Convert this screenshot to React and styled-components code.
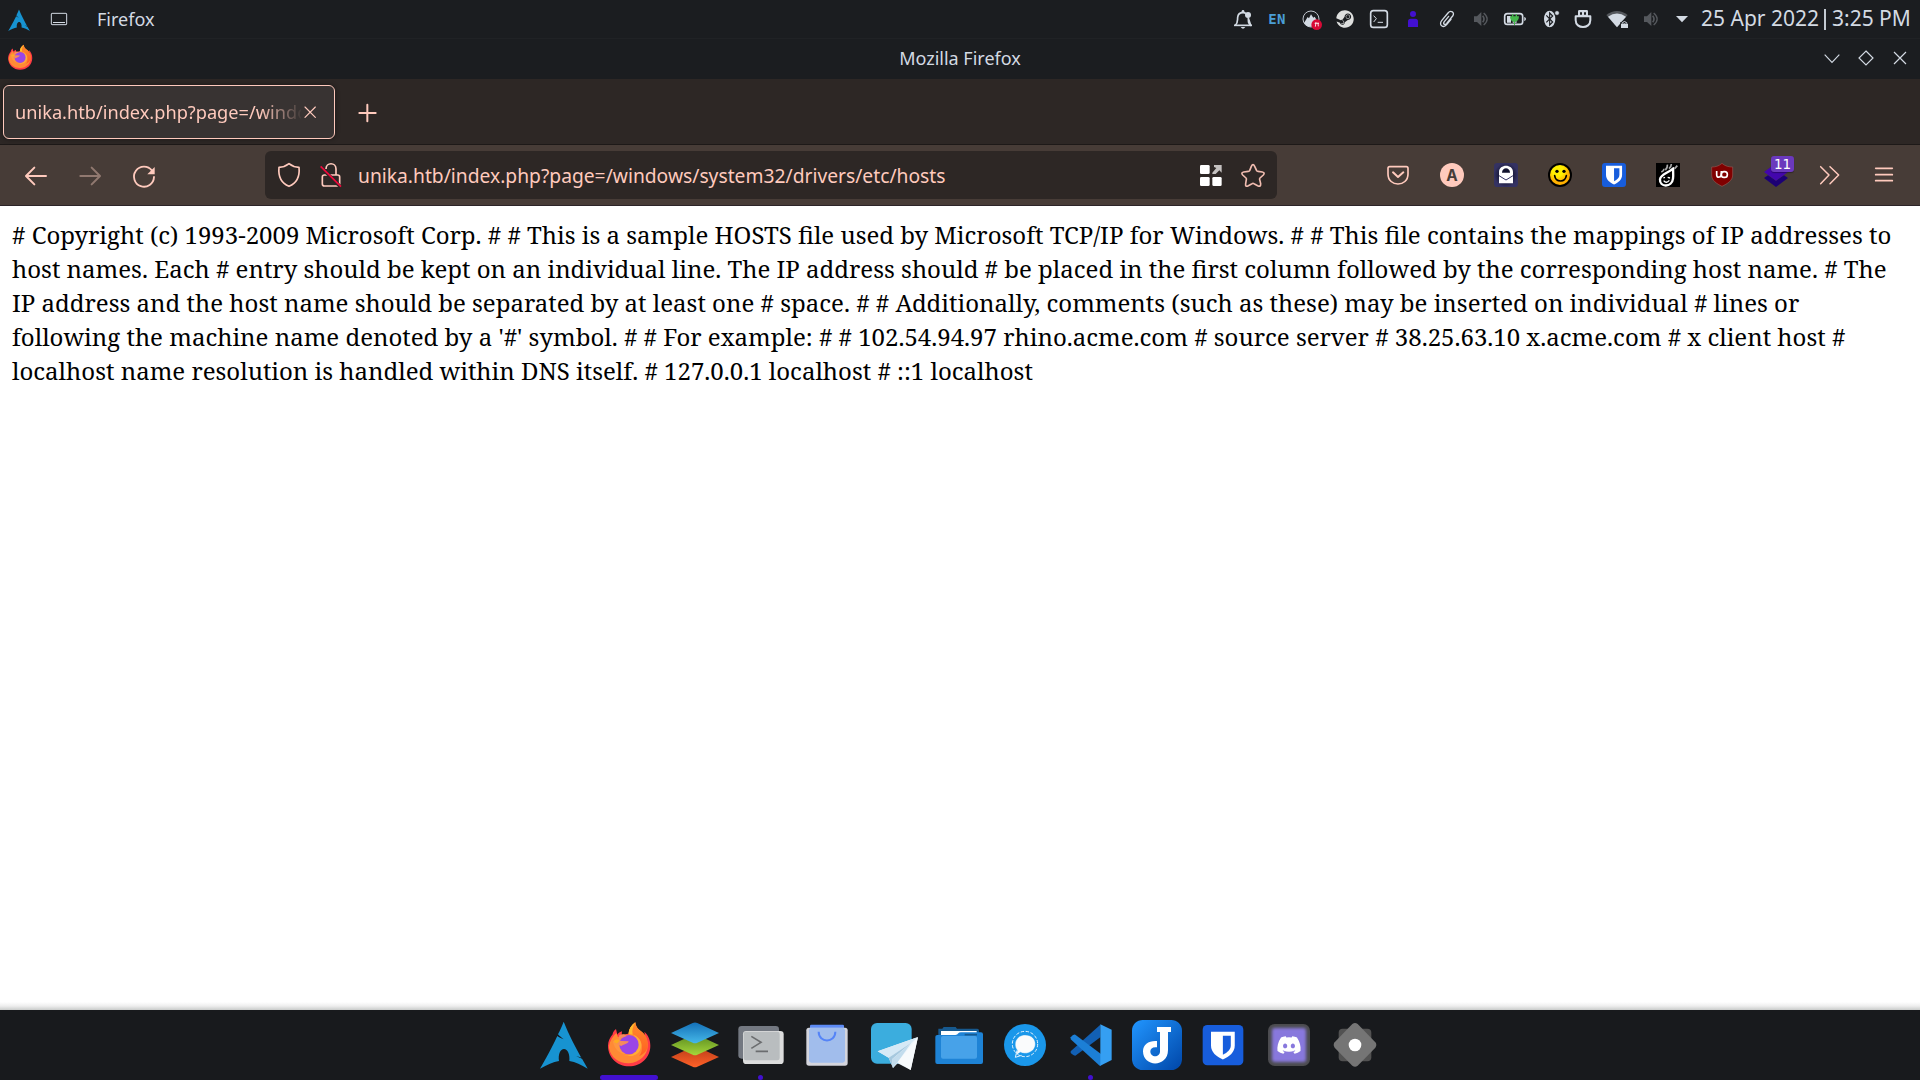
import React from "react";
import styled, { createGlobalStyle } from "styled-components";
import { FaSteam, FaDiscord } from "react-icons/fa";

const Global = createGlobalStyle`
  * { box-sizing: border-box; }
  body { margin: 0; background: #fff; overflow: hidden; }
`;

const Desktop = styled.div`
  width: 1920px;
  height: 1080px;
  display: flex;
  flex-direction: column;
  font-family: "Noto Sans", sans-serif;
  color: #d3dae3;
`;

const Panel = styled.header`
  height: 39px;
  flex: none;
  display: flex;
  align-items: center;
  background: #1b1d20;
  border-bottom: 1px solid #202225;
`;

const Glyph = styled.svg`
  display: block;
  flex: none;
  width: ${(p) => p.$w}px;
  height: ${(p) => p.$h}px;
`;

const AppName = styled.span`
  flex: 1;
  font-size: 18px;
  line-height: 38px;
  padding-left: 16px;
`;

const Tray = styled.div`
  display: flex;
  align-items: center;
`;

const TrayCell = styled.div`
  width: 34px;
  height: 39px;
  display: flex;
  align-items: center;
  justify-content: center;
  color: ${(p) => p.$color || "#d3dae3"};
  font-size: 14px;
  font-weight: 600;
  letter-spacing: 0.4px;
  font-family: "DejaVu Sans Mono", monospace;
  svg { flex: none; }
`;

const Clock = styled.div`
  display: flex;
  align-items: center;
  width: 224px;
  height: 37px;
  margin-bottom: 1px;
  padding-left: 5px;
  font-size: 21px;
  line-height: 37px;
  white-space: nowrap;
`;

const ClockRule = styled.i`
  width: 2px;
  height: 21px;
  margin: 2px 6px 0 5px;
  background: #c3c9d1;
`;

const TitleBar = styled.div`
  height: 40px;
  flex: none;
  display: grid;
  grid-template-columns: 1fr auto 1fr;
  align-items: center;
  background: #1b1d20;
`;

const WindowTitle = styled.span`
  font-size: 18px;
  line-height: 38px;
  padding-bottom: 2px;
`;

const WindowButtons = styled.div`
  display: flex;
  justify-content: flex-end;
  padding-right: 3px;
`;

const TabStrip = styled.div`
  height: 66px;
  flex: none;
  display: flex;
  padding: 6px 3px 0;
  background: #2d2725;
  border-bottom: 1px solid #1d1918;
`;

const Tab = styled.div`
  width: 332px;
  height: 54px;
  display: flex;
  align-items: center;
  padding-left: 11px;
  border: 1px solid #ffcabd;
  border-radius: 6px;
  background: #383332;
  box-shadow: 0 0 5px rgba(0, 0, 0, 0.45);
  color: #ffcabd;
`;

const TabLabel = styled.span`
  width: 286px;
  overflow: hidden;
  white-space: nowrap;
  font-size: 18.2px;
  line-height: 30px;
  mask-image: linear-gradient(to right, #000 245px, transparent 288px);
`;

const Toolbar = styled.nav`
  height: 61px;
  flex: none;
  display: flex;
  align-items: center;
  background: #473c37;
  border-bottom: 1px solid #2c2428;
`;

const NavButtons = styled.div`
  width: 265px;
  display: flex;
  padding-left: 9px;
`;

const UrlField = styled.div`
  width: 1012px;
  height: 48px;
  display: flex;
  align-items: center;
  border-radius: 6px;
  background: #2d2725;
  color: #ffcabd;
`;

const UrlText = styled.span`
  flex: 1;
  font-size: 19.25px;
  line-height: 46px;
  padding-top: 2px;
  white-space: nowrap;
`;

const Extensions = styled.div`
  display: flex;
  margin-left: 94px;
`;

const ExtensionSlot = styled.div`
  position: relative;
  width: 54px;
  height: 61px;
`;

const Badge = styled.span`
  position: absolute;
  left: 22px;
  top: 11px;
  width: 23px;
  height: 16px;
  border-radius: 3px;
  background: #6b39bd;
  box-shadow: 0 1px 1px rgba(0, 0, 0, 0.35);
  color: #fff;
  font-family: "DejaVu Sans", sans-serif;
  font-size: 13.5px;
  line-height: 16px;
  text-align: center;
`;

const Page = styled.main`
  flex: 1;
  padding: 12px 12px 0;
  background: linear-gradient(to top, #c9cbca 0, #eeeeee 4px, #fff 8px);
  color: #000;
  font-family: "Noto Serif", "DejaVu Serif Condensed", serif;
  font-size: 24px;
  line-height: 34px;
`;

const Dock = styled.footer`
  height: 70px;
  flex: none;
  display: flex;
  justify-content: center;
  background: #181a1d;
`;

const DockItem = styled.div`
  position: relative;
  width: 66px;
  height: 70px;
`;

const Running = styled.i`
  position: absolute;
  bottom: 0;
  left: ${(p) => (p.$active ? 3 : 29)}px;
  width: ${(p) => (p.$active ? 58 : 5)}px;
  height: 5px;
  border-radius: 3px;
  background: #4210d0;
`;

const PINK = "#ffcabd";
const LIGHT = "#d3dae3";

/* Glyphs are drawn on a grid of three units per pixel. */
function Art({ box, children, ...rest }) {
  const [, , w, h] = box;
  return (
    <Glyph $w={w / 3} $h={h / 3} viewBox={box.join(" ")} fill="none" {...rest}>
      {children}
    </Glyph>
  );
}

const tray = (x, w = 102) => [x, 0, w, 117];
const ext = (x) => [x, 15, 162, 183];
const dock = (x) => [x, 30, 198, 210];

const ARCH = "M101 65C95 80 91 90 84 103C90 109 94 113 101 118C93 115 87 112 82 108C73 127 59 156 30 206C52 194 69 186 87 183C84 163 91 147 102 147C113 147 120 163 118 183C137 186 153 194 173 206C167 195 161 186 157 178C152 174 147 172 139 169C146 170 151 172 154 173C135 138 118 107 101 65Z";

function FirefoxArt() {
  return (
    <>
      <defs>
        <linearGradient id="fxFlame" x1="0.5" y1="0" x2="0.5" y2="1">
          <stop offset="0" stopColor="#ff8a2b" />
          <stop offset="1" stopColor="#ff5f22" />
        </linearGradient>
      </defs>
      <path d="M258 87C250 93 248 99 248 103C240 112 234 124 234 137C234 172 262 199 297 199C333 199 361 172 361 137C361 121 356 106 343 95L346 112L300 100L275 106L276 94C268 97 264 100 262 104Z" fill="#ff3a46" />
      <path d="M316 67C303 77 297 88 295 104C279 102 270 107 264 112L259 99C244 113 237 130 237 144C243 174 268 191 297 190C330 188 352 165 353 139C354 119 347 104 332 93C320 84 317 76 316 67Z" fill="#ff8a35" />
      <path d="M316 67C303 77 296 88 296 101C315 101 330 112 335 132C338 148 334 160 327 169C345 160 353 149 353 137C355 112 341 99 329 91C320 84 317 76 316 67Z" fill="url(#fxFlame)" />
      <path d="M316 67C303 77 296 88 296 101L308 104C305 91 309 78 316 67Z" fill="#ffbd2a" />
      <path d="M310 105C331 112 339 132 331 149C323 166 300 174 277 163C294 171 313 163 319 149C326 134 324 116 310 105Z" fill="#ffad35" />
      <path d="M249 126C259 117 270 119 279 121C291 124 296 123 294 128C287 136 277 134 272 144C274 156 284 161 293 163C266 162 253 145 249 126Z" fill="#ff9640" />
      <circle cx="297" cy="134" r="29" fill="#9a45e6" />
      <path d="M268 105C277 101 286 103 290 108L274 115C266 120 268 124 277 123L296 124C295 131 283 132 274 138C260 133 251 129 249 124C256 118 262 119 266 119Z" fill="#f58b5d" />
      <path d="M250 126C254 117 263 117 269 122L261 131Z" fill="#ffab1f" />
    </>
  );
}

function ShieldArt({ x, y, s }) {
  return (
    <g transform={`translate(${x} ${y}) scale(${s})`}>
      <path d="M0 0H72V42C72 62 56 76 36 84C16 76 0 62 0 42Z" fill="#fff" />
      <path d="M36 12H60V42C60 54 50 63 36 70Z" fill="#175ddc" />
    </g>
  );
}

function SpeakerArt({ box, x }) {
  return (
    <Art box={box}>
      <g transform={`translate(${x} 0)`} fill="#55585d">
        <path d="M0 49H9L22 36V78L9 66H0Z" />
        <path d="M26 47Q34 57 26 67" stroke="#55585d" strokeWidth="5" fill="none" />
        <path d="M29 39Q50 57 29 75" stroke="#55585d" strokeWidth="4" fill="none" />
      </g>
    </Art>
  );
}

function SystemTray() {
  return (
    <Tray>
      <TrayCell>
        <Art box={tray(18)} stroke={LIGHT} strokeWidth="5">
          <path d="M46 76C54 69 52 64 53 52C54 42 60 38 69 38C73 38 76 39 78 41M85 55C85 67 85 70 92 76Z" strokeLinejoin="round" />
          <path d="M42 76H96" />
          <circle cx="69" cy="34" r="4" fill={LIGHT} stroke="none" />
          <path d="M62 81H76Q69 92 62 81Z" fill={LIGHT} stroke="none" />
          <circle cx="84" cy="45" r="9" fill={LIGHT} stroke="none" />
        </Art>
      </TrayCell>
      <TrayCell $color="#4a9ed6">EN</TrayCell>
      <TrayCell>
        <Art box={tray(222)}>
          <circle cx="273" cy="57" r="24" stroke="#bfc4cc" strokeWidth="3" />
          <path d="M252 69L263 51L267 55L273 43L280 53L284 50L294 67Q287 80 272 80Q258 80 252 69Z" fill={LIGHT} />
          <circle cx="290" cy="74" r="16" fill="#d80a36" />
          <path d="M284 70H297M288 66L286 80M294 68L295 79" stroke="#fff" strokeWidth="2.500" />
        </Art>
      </TrayCell>
      <TrayCell $color="#dedfde"><FaSteam size={18} /></TrayCell>
      <TrayCell>
        <Art box={tray(426)} stroke={LIGHT}>
          <rect x="452" y="32" width="50" height="50" rx="8" strokeWidth="5" />
          <path d="M461 47L469 56L461 66M473 67H489" strokeWidth="3" />
        </Art>
      </TrayCell>
      <TrayCell>
        <Art box={tray(528)}>
          <circle cx="579" cy="42" r="9" fill="#4210d0" />
          <path d="M564 81V64Q564 56 572 56H586Q594 56 594 64V81Z" fill="#4210d0" />
        </Art>
      </TrayCell>
      <TrayCell>
        <Art box={tray(630)} stroke={LIGHT} strokeWidth="4" strokeLinecap="round">
          <path d="M686 49L673 65C668 72 674 77 680 70L698 48C706 37 692 29 684 39L665 62C655 75 670 86 680 74L693 58" />
        </Art>
      </TrayCell>
      <TrayCell><SpeakerArt box={tray(732)} x={762} /></TrayCell>
      <TrayCell>
        <Art box={tray(834)}>
          <rect x="854" y="41" width="54" height="32" rx="8" fill="#1b1d20" stroke={LIGHT} strokeWidth="5" />
          <path d="M861 48H873V68H861ZM878 64H890V68H878Z" fill={LIGHT} />
          <path d="M914 52Q920 57 914 62Z" fill={LIGHT} stroke={LIGHT} strokeWidth="2" />
          <path d="M870 49H876V42H880V49H887V42H891V49H897C897 59 892 65 885 66V75H882V66C875 65 870 59 870 49Z" fill="#45b54c" />
        </Art>
      </TrayCell>
      <TrayCell>
        <Art box={tray(936)}>
          <ellipse cx="989" cy="57" rx="17" ry="25" fill={LIGHT} />
          <path d="M979 46L998 66L989 75V39L998 48L979 67" stroke="#1b1d20" strokeWidth="3.500" />
          <circle cx="1011" cy="39" r="7" fill={LIGHT} stroke="#1b1d20" strokeWidth="2" />
        </Art>
      </TrayCell>
      <TrayCell>
        <Art box={tray(48)}>
          <path d="M77 49H121V61C121 88 77 88 77 61Z" stroke={LIGHT} strokeWidth="6" strokeLinejoin="round" />
          <path d="M84 49V34Q84 30 88 30H110Q114 30 114 34V49ZM90 37V44H96V37ZM102 37V44H108V37Z" fill={LIGHT} fillRule="evenodd" />
        </Art>
      </TrayCell>
      <TrayCell>
        <Art box={tray(150)}>
          <path d="M169 45Q201 21 233 45L201 82Z" fill="#55585d" />
          <path d="M174 50Q201 31 228 50L201 82Z" fill={LIGHT} />
          <path d="M211 66H236V86H211Z" fill="#1b1d20" />
          <rect x="213" y="70" width="21" height="14" fill={LIGHT} />
          <path d="M217 71V68Q223 60 230 68V71" stroke="#1b1d20" strokeWidth="7" />
          <path d="M217 71V68Q223 61 230 68V71" stroke={LIGHT} strokeWidth="3" />
        </Art>
      </TrayCell>
      <TrayCell><SpeakerArt box={tray(252)} x={282} /></TrayCell>
      <Art box={tray(354, 84)}>
        <path d="M378 48H414L396 67Z" fill={LIGHT} />
      </Art>
    </Tray>
  );
}

function BrowserToolbar() {
  return (
    <Toolbar>
      <NavButtons>
        <Art box={[27, 435, 162, 183]} stroke={PINK} strokeWidth="6" strokeLinecap="round" strokeLinejoin="round">
          <path d="M138 528H79M103 503L78 528L103 553" />
        </Art>
        <Art box={[189, 435, 162, 183]} stroke="#917970" strokeWidth="6" strokeLinecap="round" strokeLinejoin="round">
          <path d="M241 528H299M275 503L300 528L275 553" />
        </Art>
        <Art box={[351, 435, 162, 183]} stroke={PINK} strokeWidth="5.500" strokeLinecap="round">
          <path d="M456 512A30 30 0 1 0 462 531" />
          <path d="M464 501V523H442Z" fill={PINK} stroke="none" />
        </Art>
      </NavButtons>
      <UrlField>
        <Art box={[795, 453, 144, 144]} stroke={PINK} strokeWidth="5" strokeLinejoin="round">
          <path d="M867 491C858 498 847 502 837 502C834 531 846 550 867 559C888 550 900 531 897 502C887 502 876 498 867 491Z" />
        </Art>
        <Art box={[939, 453, 135, 144]} stroke={PINK} strokeWidth="5">
          <path d="M978 507C978 486 1008 486 1008 507V525" />
          <rect x="967" y="525" width="52" height="33" rx="6" />
          <path d="M961 500L1022 561" stroke="#2d2725" strokeWidth="10" />
          <path d="M962 499L1023 560" stroke="#f0093c" strokeWidth="5" />
        </Art>
        <UrlText>unika.htb/index.php?page=/windows/system32/drivers/etc/hosts</UrlText>
        <Art box={[150, 33, 126, 144]}>
          <rect x="180" y="75" width="29" height="27" rx="4" fill="#fff" />
          <rect x="180" y="111" width="29" height="27" rx="4" fill="#fff" />
          <rect x="217" y="111" width="28" height="27" rx="4" fill="#fff" />
          <path d="M222 75H245V98L238 91L227 102H217V98L229 84L222 81Z" fill="#c4c1c0" />
        </Art>
        <Art box={[276, 33, 135, 144]} stroke="#f0bcb0" strokeWidth="5" strokeLinejoin="round">
          <path d="M334 79Q339 69 344 79L350 92Q351 94 354 94L367 96Q376 98 370 105L360 114Q358 116 359 119L362 131Q363 142 353 137L342 131Q339 129 336 131L325 137Q315 142 317 131L319 119Q320 116 318 114L308 105Q302 98 311 96L325 94Q328 94 329 92Z" />
        </Art>
      </UrlField>
      <Extensions>
        <Art box={ext(3)} stroke={PINK} strokeWidth="5" strokeLinecap="round" strokeLinejoin="round">
          <path d="M59 80H109Q114 80 114 85V102C114 142 54 142 54 102V85Q54 80 59 80Z" />
          <path d="M69 97L84 111L100 97" strokeWidth="6" />
        </Art>
        <Art box={ext(165)}>
          <circle cx="246" cy="105" r="36" fill={PINK} />
          <text x="246" y="122" textAnchor="middle" fontFamily="Inter, sans-serif" fontWeight="700" fontSize="46" fill="#473c37">A</text>
        </Art>
        <Art box={ext(327)}>
          <defs>
            <radialGradient id="lockGlow">
              <stop offset="0.4" stopColor="#11122c" />
              <stop offset="1" stopColor="#343262" />
            </radialGradient>
          </defs>
          <rect x="372" y="69" width="72" height="72" rx="10" fill="url(#lockGlow)" />
          <path d="M387 130V96C387 71 429 71 429 96V130ZM396 98H420C420 80 396 80 396 98Z" fill="#fff" fillRule="evenodd" />
          <path d="M387 107L408 120L429 107" stroke="#343262" strokeWidth="3" />
        </Art>
        <Art box={ext(489)}>
          <defs>
            <radialGradient id="smile" cx="0.4" cy="0.3">
              <stop offset="0.5" stopColor="#fff000" />
              <stop offset="1" stopColor="#ffb000" />
            </radialGradient>
          </defs>
          <circle cx="570" cy="105" r="33" fill="url(#smile)" stroke="#000" strokeWidth="6" />
          <circle cx="561" cy="94" r="5" fill="#000" />
          <circle cx="582" cy="94" r="5" fill="#000" />
          <path d="M554 107Q556 123 572 123Q586 123 589 107" stroke="#000" strokeWidth="5" strokeLinecap="round" />
        </Art>
        <Art box={ext(651)}>
          <rect x="696" y="69" width="72" height="72" rx="9" fill="#175ddc" />
          <ShieldArt x={708} y={77} s={0.67} />
        </Art>
        <Art box={ext(3)}>
          <rect x="48" y="69" width="72" height="72" fill="#000" />
          <path d="M100 85C98 94 101 101 99 116C96 143 58 143 60 118C62 102 84 100 100 85Z" stroke="#fff" strokeWidth="7" strokeLinejoin="round" />
          <path d="M64 96Q72 92 72 86M76 90Q83 84 82 74M87 86Q94 80 94 72M104 86L112 77" stroke="#aaa" strokeWidth="5" />
          <path d="M70 114L75 112M83 112L90 114M71 122Q79 132 88 121" stroke="#fff" strokeWidth="4" />
        </Art>
        <Art box={ext(165)}>
          <path d="M246 70C236 79 225 81 215 81V105C215 122 230 131 246 139C262 131 278 122 278 105V81C267 81 256 79 246 70Z" fill="#800000" stroke="#915752" strokeWidth="2" />
          <path d="M230 93V104Q230 113 238 111Q244 110 244 102V93" stroke="#fff" strokeWidth="5" />
          <rect x="244" y="95" width="18" height="17" rx="8" stroke="#fff" strokeWidth="5" />
        </Art>
        <ExtensionSlot>
          <Art box={ext(327)}>
            <path d="M372 114L384 106L408 122L432 106L444 114L408 141Z" fill="#1c0075" />
            <path d="M408 70L444 96L408 122L372 96Z" fill="#4306ad" />
          </Art>
          <Badge>11</Badge>
        </ExtensionSlot>
        <Art box={ext(489)} stroke={PINK} strokeWidth="4.500" strokeLinecap="round" strokeLinejoin="round">
          <path d="M542 80L567 105L542 131M570 80L596 105L570 131" />
        </Art>
        <Art box={ext(651)} stroke={PINK} strokeWidth="5" strokeLinecap="round">
          <path d="M707 85H757M707 104H757M707 122H757" />
        </Art>
      </Extensions>
    </Toolbar>
  );
}

function DockBar() {
  return (
    <Dock>
      <DockItem>
        <Art box={dock(3)}><path d={ARCH} fill="#1793d1" /></Art>
      </DockItem>
      <DockItem>
        <Art box={dock(201)}><FirefoxArt /></Art>
        <Running $active />
      </DockItem>
      <DockItem>
        <Art box={dock(399)}>
          <defs>
            <linearGradient id="lyBlue" x1="0" y1="0" x2="0" y2="1"><stop stopColor="#1470b8" /><stop offset="1" stopColor="#45b8e8" /></linearGradient>
            <linearGradient id="lyGreen" x1="0" y1="0" x2="0" y2="1"><stop stopColor="#5a8a20" /><stop offset="1" stopColor="#a4d63a" /></linearGradient>
            <linearGradient id="lyRed" x1="0" y1="0" x2="0" y2="1"><stop stopColor="#b83c18" /><stop offset="1" stopColor="#ff6128" /></linearGradient>
          </defs>
          <path d="M423 171L488 141Q495 138 502 141L567 171L502 200Q495 203 488 200Z" fill="url(#lyRed)" />
          <path d="M423 135L488 105Q495 102 502 105L567 135L502 164Q495 167 488 164Z" fill="url(#lyGreen)" />
          <path d="M423 99L488 69Q495 66 502 69L567 99L502 128Q495 131 488 128Z" fill="url(#lyBlue)" />
        </Art>
      </DockItem>
      <DockItem>
        <Art box={dock(597)}>
          <rect x="625" y="78" width="122" height="98" rx="10" fill="#737881" />
          <rect x="639" y="93" width="122" height="99" rx="10" fill="#dcdddd" />
          <rect x="641" y="95" width="108" height="86" rx="7" fill="#b9bdbf" />
          <path d="M664 109L693 127L664 145M677 154H714" stroke="#6b6d6f" strokeWidth="5" />
        </Art>
        <Running />
      </DockItem>
      <DockItem>
        <Art box={dock(-15)}>
          <rect x="30" y="74" width="102" height="20" rx="4" fill="#5d8bf5" />
          <rect x="19" y="83" width="124" height="114" rx="8" fill="#d4d5dd" />
          <rect x="27" y="84" width="108" height="104" rx="7" fill="#a1bdec" />
          <path d="M56 95C56 130 106 130 106 95" stroke="#5584f7" strokeWidth="6" />
        </Art>
      </DockItem>
      <DockItem>
        <Art box={dock(183)}>
          <rect x="213" y="69" width="122" height="122" rx="18" fill="#3badde" />
          <path d="M354 111L233 154L266 173L279 204L293 190L332 210Z" fill="#eef5fa" />
          <path d="M334 128L266 173L233 154L352 112Z" fill="#d5e9f6" />
          <path d="M334 128L276 178L279 204L266 173Z" fill="#a6c9df" />
          <path d="M334 128L276 178L279 204L294 185Z" fill="#c2dced" />
          <path d="M354 111L294 185L332 210Z" fill="#f7fafc" />
        </Art>
      </DockItem>
      <DockItem>
        <Art box={dock(381)}>
          <path d="M415 86H427L431 81H467L471 86H532Q537 86 537 92V120H415Z" fill="#17598e" />
          <path d="M423 93H530V120H423Z" fill="#fff" />
          <path d="M406 110Q406 105 412 105H466Q472 105 475 100Q477 97 483 97H543Q549 97 549 103V186Q549 192 543 192H412Q406 192 406 186Z" fill="#1e83d6" />
          <rect x="423" y="108" width="108" height="68" rx="6" fill="#47a2e9" />
          <path d="M494 104H531" stroke="#17598e" strokeWidth="5" />
        </Art>
      </DockItem>
      <DockItem>
        <Art box={dock(579)}>
          <circle cx="675" cy="135" r="63" fill="#1a97ea" />
          <circle cx="675" cy="132" r="38" stroke="#e2f1fc" strokeWidth="3" strokeDasharray="10 5" />
          <path d="M675 105C695 105 706 117 706 132C706 149 691 160 674 160C669 160 665 159 661 157L648 166L652 151C637 132 650 105 675 105Z" fill="#fafbfc" stroke="#1a97ea" strokeWidth="1" />
          <path d="M651 151L646 172L665 166" stroke="#e2f1fc" strokeWidth="3" />
        </Art>
      </DockItem>
      <DockItem>
        <Art box={[0, 0, 198, 210]}>
          <path d="M35 124L124 44V82L49 137Q45 138 35 129Z" fill="#1260b4" />
          <path d="M35 82Q43 71 49 74L126 132V167H122L35 88Z" fill="#1c7fd6" />
          <path d="M124 43L158 59V150L124 167Z" fill="#359ff2" />
        </Art>
        <Running />
      </DockItem>
      <DockItem>
        <Art box={dock(135)}>
          <defs>
            <linearGradient id="jop" x1="0" y1="0" x2="1" y2="1"><stop stopColor="#2196ff" /><stop offset="1" stopColor="#0046a8" /></linearGradient>
          </defs>
          <rect x="156" y="60" width="150" height="150" rx="32" fill="url(#jop)" />
          <path d="M231 81H273V96H264V150C264 203 189 203 189 154C189 133 207 121 231 123V142C218 140 211 146 211 154C211 174 240 174 240 154V96H231Z" fill="#fff" />
        </Art>
      </DockItem>
      <DockItem>
        <Art box={dock(333)}>
          <rect x="368" y="75" width="122" height="121" rx="14" fill="#175ddc" />
          <ShieldArt x={393} y={95} s={0.99} />
        </Art>
      </DockItem>
      <DockItem>
        <Art box={dock(531)}>
          <defs><filter id="soft"><feGaussianBlur stdDeviation="4" /></filter></defs>
          <rect x="564" y="72" width="126" height="126" rx="20" fill="#4b4b4e" />
          <rect x="576" y="84" width="102" height="102" rx="8" fill="#8878dd" filter="url(#soft)" />
          <FaDiscord x={589} y={97} size={76} color="#fff" />
        </Art>
      </DockItem>
      <DockItem>
        <Art box={dock(729)}>
          <rect x="776" y="86" width="98" height="98" rx="12" fill="#525252" />
          <path d="M817 72Q825 66 833 72L886 127Q892 135 886 143L833 197Q825 203 817 197L764 143Q758 135 764 127Z" fill="#757575" />
          <circle cx="825" cy="135" r="19" fill="#fff" />
        </Art>
      </DockItem>
    </Dock>
  );
}

export default function App() {
  return (
    <Desktop>
      <Global />
      <Panel>
        <Art box={[0, 0, 117, 117]}>
          <g transform="translate(10.8 -5) scale(0.457)">
            <path d={ARCH} fill="#1793d1" transform="translate(0 9)" />
          </g>
        </Art>
        <Art box={[117, 0, 126, 117]} stroke={LIGHT} strokeWidth="3">
          <rect x="154" y="40" width="46" height="34" rx="2" />
          <path d="M159 67.500H195" />
        </Art>
        <AppName>Firefox</AppName>
        <SystemTray />
        <Clock>25 Apr 2022<ClockRule />3:25 PM</Clock>
      </Panel>
      <TitleBar>
        <Art box={[0, 117, 120, 120]}>
          <g transform="translate(-109 96) scale(0.57)"><FirefoxArt /></g>
        </Art>
        <WindowTitle>Mozilla Firefox</WindowTitle>
        <WindowButtons>
          <Art box={[795, 117, 102, 120]} stroke={LIGHT} strokeWidth="3.500">
            <path d="M824 164L846 187L868 164" />
          </Art>
          <Art box={[897, 117, 102, 120]} stroke={LIGHT} strokeWidth="3.500">
            <path d="M948 153L969 174L948 195L927 174Z" />
          </Art>
          <Art box={[999, 117, 102, 120]} stroke={LIGHT} strokeWidth="3.500">
            <path d="M1032 156L1068 192M1068 156L1032 192" />
          </Art>
        </WindowButtons>
      </TitleBar>
      <TabStrip>
        <Tab>
          <TabLabel>unika.htb/index.php?page=/windows</TabLabel>
          <Art box={[904, 301, 54, 70]} stroke={PINK} strokeWidth="3.500" strokeLinecap="round">
            <path d="M916 322L947 353M947 322L916 353" />
          </Art>
        </Tab>
        <Art box={[1005, 255, 192, 162]} stroke={PINK} strokeWidth="6" strokeLinecap="round">
          <path d="M1078 339H1127M1102 314V364" />
        </Art>
      </TabStrip>
      <BrowserToolbar />
      <Page>
        # Copyright (c) 1993-2009 Microsoft Corp. # # This is a sample HOSTS file used by Microsoft TCP/IP for Windows. # # This file contains the mappings of IP addresses to host names. Each # entry should be kept on an individual line. The IP address should # be placed in the first column followed by the corresponding host name. # The IP address and the host name should be separated by at least one # space. # # Additionally, comments (such as these) may be inserted on individual # lines or following the machine name denoted by a '#' symbol. # # For example: # # 102.54.94.97 rhino.acme.com # source server # 38.25.63.10 x.acme.com # x client host # localhost name resolution is handled within DNS itself. # 127.0.0.1 localhost # ::1 localhost
      </Page>
      <DockBar />
    </Desktop>
  );
}
